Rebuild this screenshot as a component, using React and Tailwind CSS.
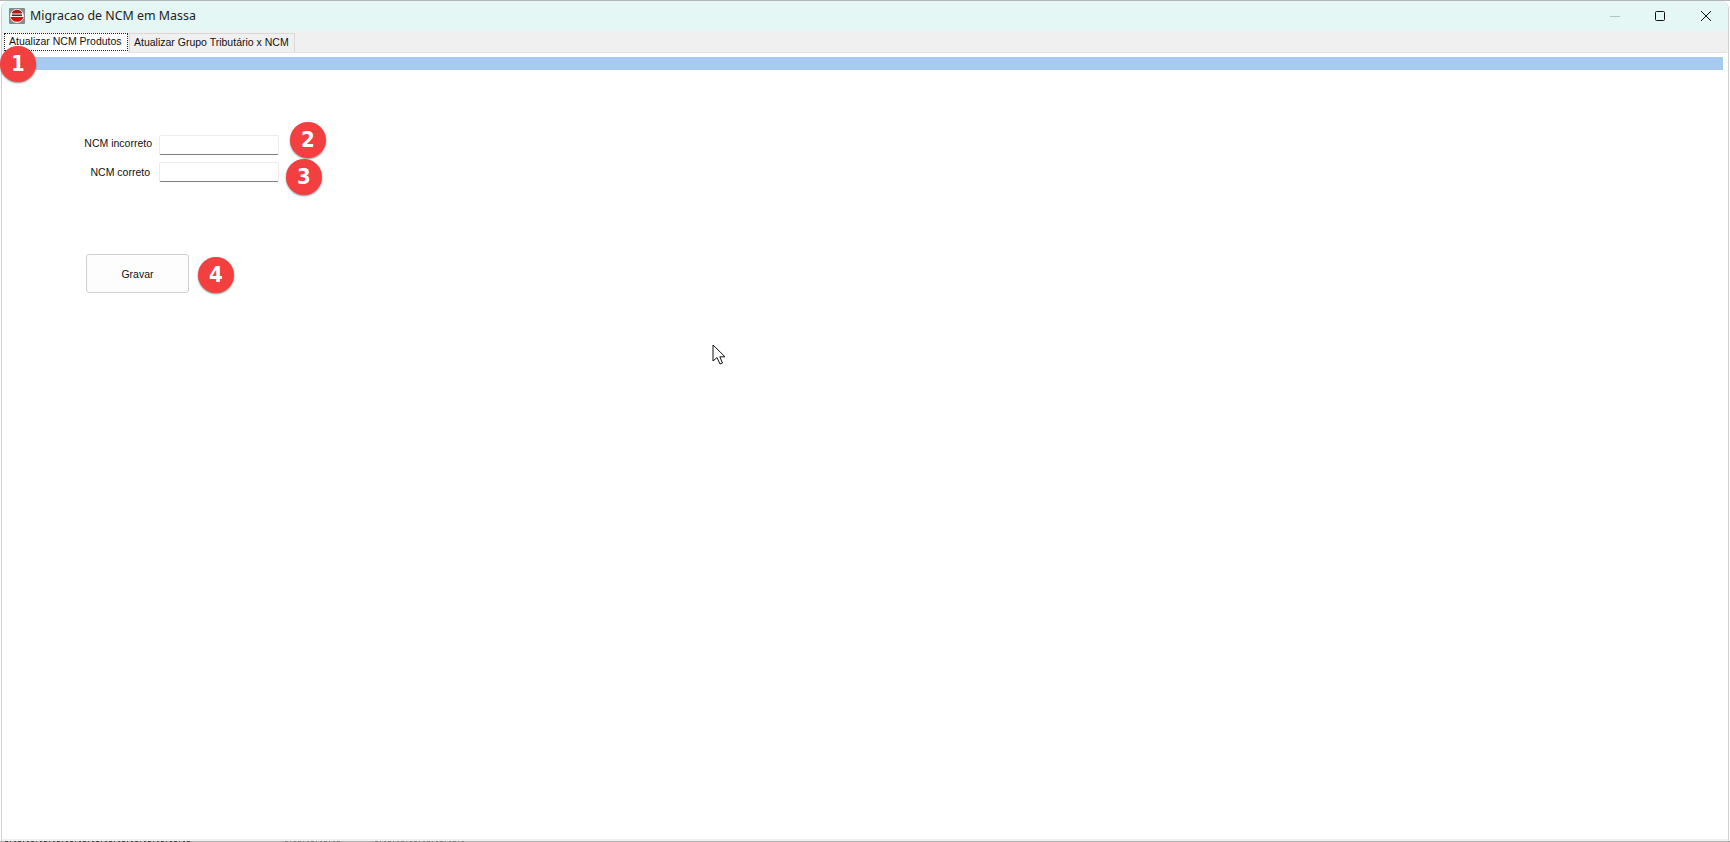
import React from "react";

const ui = "font-['Liberation_Sans',sans-serif]";

function Badge({ n, className }) {
  return (
    <div className={`absolute w-[36px] h-[36px] rounded-full bg-[#f33f3f] shadow-[0_1px_2px_rgba(0,0,0,0.45)] flex items-center justify-center text-white text-[22px] font-bold font-['DejaVu_Sans_Condensed','DejaVu_Sans',sans-serif] leading-none ${className}`}>
      {n}
    </div>
  );
}

function Field({ label, labelClass }) {
  return (
    <div className="flex items-center h-[20px]">
      <div className="w-[158px] flex justify-end">
        <span className={`text-[10.5px] text-[#111] whitespace-nowrap ${labelClass}`}>{label}</span>
      </div>
      <div className="w-[120px] h-[20px] bg-white rounded-[2px] border border-[#ececec] border-b-[#7f7f7f]" />
    </div>
  );
}

export default function App() {
  return (
    <div className={`relative w-[1730px] h-[842px] overflow-hidden bg-white ${ui}`}>
      <div className="h-[1px] bg-[#b5b5b5]" />
      <div className="mx-[1px] h-[840px] flex flex-col rounded-t-[8px] overflow-hidden border-x border-[#d0d0d0] bg-white">
        <div className="h-[30px] bg-[#e4f7f5] flex items-center shrink-0">
          <svg width="16" height="16" viewBox="0 0 16 16" className="ml-[7px] shrink-0">
            <rect x="0" y="0" width="16" height="16" rx="1" fill="#8a8a8a" />
            <circle cx="8" cy="8" r="7" fill="#f2f2f2" />
            <path d="M1.5 9H14.5A6.8 6.8 0 0 1 1.5 9Z" fill="#cc1414" />
            <path d="M3 4.5A6 6 0 0 1 13 4.5L13 5.5H3Z" fill="#b71616" />
            <rect x="3" y="6.5" width="10" height="1.5" fill="#333" />
          </svg>
          <span className="ml-[5px] text-[12.4px] text-[#222] font-['Noto_Sans',sans-serif] whitespace-nowrap">Migracao de NCM em Massa</span>
          <div className="ml-auto flex items-center">
            <svg width="12" height="12" viewBox="0 0 12 12" className="mr-[33px]"><path d="M1 6.5H11" stroke="#b5c4c3" strokeWidth="1" /></svg>
            <svg width="12" height="12" viewBox="0 0 12 12" className="mr-[34px]"><rect x="1.5" y="1.5" width="9" height="9" rx="1" fill="none" stroke="#111" strokeWidth="1" /></svg>
            <svg width="12" height="12" viewBox="0 0 12 12" className="mr-[16px]"><path d="M1 1L11 11M11 1L1 11" stroke="#111" strokeWidth="1" /></svg>
          </div>
        </div>

        <div className="h-[21px] bg-[#f0f0f0] flex items-end pl-[2px] shrink-0 relative">
          <div className="h-[20px] w-[124px] bg-white relative top-[1px] pb-[2px]">
            <div className="h-[18px] outline-1 -outline-offset-1 outline-dotted outline-[#222] pl-[5px] flex items-center">
              <span className="text-[10.5px] text-[#111] whitespace-nowrap">Atualizar NCM Produtos</span>
            </div>
          </div>
          <div className="ml-[1px] h-[19px] w-[166px] bg-[#f0f0f0] border-x border-t border-[#d9d9d9] pl-[4px] flex items-center">
            <span className="text-[10.5px] text-[#111] whitespace-nowrap">Atualizar Grupo Tributário x NCM</span>
          </div>
        </div>

        <div className="flex-1 flex flex-col border-t border-[#e3e3e3] mx-[1px] pl-[2px] pt-[4px] pr-[4px] bg-white">
          <div className="h-[13px] bg-[#a6caf0] shrink-0" />
          <div className="mt-[65px] -ml-[4px] flex flex-col gap-[7px]">
            <Field label="NCM incorreto" labelClass="mr-[7px] mb-[3px]" />
            <Field label="NCM correto" labelClass="mr-[9px] mt-[2px]" />
          </div>
          <button className="mt-[72px] ml-[81px] w-[103px] h-[39px] bg-[#fdfdfd] border border-[#d0d0d0] rounded-[3px] text-[10.5px] text-[#111] pt-[2px]">Gravar</button>
        </div>
        <div className="h-[2px] bg-[#f0f0f0] shrink-0" />
      </div>

      <svg width="1730" height="1" viewBox="0 0 1730 1" className="block">
        <rect width="1730" height="1" fill="#b0b0b0" />
        <path d="M5 .5H190" stroke="#444" strokeDasharray="3 2 1 3 2 2" />
        <path d="M285 .5H342M375 .5H465" stroke="#777" strokeDasharray="3 2 1 3 2 2" />
      </svg>

      <Badge n="1" className="left-[0px] top-[46px]" />
      <Badge n="2" className="left-[290px] top-[122px]" />
      <Badge n="3" className="left-[286px] top-[159px]" />
      <Badge n="4" className="left-[198px] top-[257px]" />

      <svg width="14" height="22" viewBox="0 0 14 22" className="absolute left-[712px] top-[344px]">
        <path d="M1 1V17L5 13.5L8 20L10.5 19L7.8 12.8H13Z" fill="#fff" stroke="#111" strokeWidth="1" />
      </svg>
    </div>
  );
}
